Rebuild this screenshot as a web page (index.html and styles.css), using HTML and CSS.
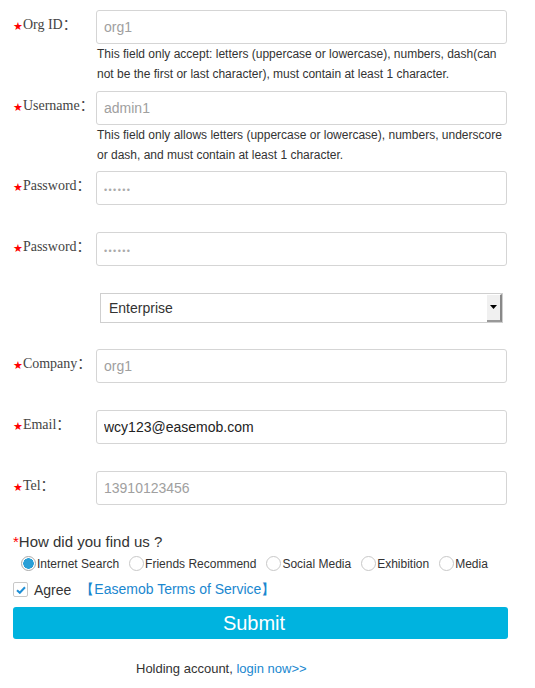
FILE: index.html
```html
<!DOCTYPE html>
<html>
<head>
<meta charset="utf-8">
<link rel="stylesheet" href="styles.css">
</head>
<body>
<form class="reg">
  <div class="row">
    <label class="lbl"><span class="star">★</span>Org ID：</label>
    <div class="field">
      <input class="inp" type="text" placeholder="org1">
      <div class="help">This field only accept: letters (uppercase or lowercase), numbers, dash(can not be the first or last character), must contain at least 1 character.</div>
    </div>
  </div>
  <div class="row">
    <label class="lbl"><span class="star">★</span>Username：</label>
    <div class="field">
      <input class="inp" type="text" placeholder="admin1">
      <div class="help">This field only allows letters (uppercase or lowercase), numbers, underscore or dash, and must contain at least 1 character.</div>
    </div>
  </div>
  <div class="row">
    <label class="lbl"><span class="star">★</span>Password：</label>
    <div class="field">
      <input class="inp dots" type="text" placeholder="••••••">
      <div class="help"></div>
    </div>
  </div>
  <div class="row">
    <label class="lbl"><span class="star">★</span>Password：</label>
    <div class="field">
      <input class="inp dots" type="text" placeholder="••••••">
      <div class="help"></div>
    </div>
  </div>
  <div class="row">
    <div class="lbl"></div>
    <div class="field">
      <div class="sel"><span class="sel-text">Enterprise</span><span class="sel-btn"><svg width="7" height="4" viewBox="0 0 7 4"><path d="M0 0H7L3.5 4Z" fill="#000"/></svg></span></div>
      <div class="help"></div>
    </div>
  </div>
  <div class="row">
    <label class="lbl"><span class="star">★</span>Company：</label>
    <div class="field">
      <input class="inp" type="text" placeholder="org1">
      <div class="help"></div>
    </div>
  </div>
  <div class="row">
    <label class="lbl"><span class="star">★</span>Email：</label>
    <div class="field">
      <input class="inp" type="text" value="wcy123@easemob.com">
      <div class="help"></div>
    </div>
  </div>
  <div class="row">
    <label class="lbl"><span class="star">★</span>Tel：</label>
    <div class="field">
      <input class="inp" type="text" placeholder="13910123456">
      <div class="help"></div>
    </div>
  </div>

  <div class="q"><span class="qstar">*</span>How did you find us ?</div>
  <div class="radios">
    <label class="radio"><span class="rc on"></span>Internet Search</label>
    <label class="radio"><span class="rc"></span>Friends Recommend</label>
    <label class="radio"><span class="rc"></span>Social Media</label>
    <label class="radio"><span class="rc"></span>Exhibition</label>
    <label class="radio"><span class="rc"></span>Media</label>
  </div>
  <div class="agree">
    <span class="cb"><svg width="10" height="8" viewBox="0 0 10 8"><path d="M1 4.2L3.8 6.8L9 1.2" fill="none" stroke="#1e8fd6" stroke-width="2"/></svg></span>
    <span class="agree-t">Agree</span>
    <a class="terms" href="#">【Easemob Terms of Service】</a>
  </div>
  <button class="submit" type="button">Submit</button>
  <div class="login">Holding account, <a href="#">login now&gt;&gt;</a></div>
</form>
</body>
</html>
```

FILE: styles.css
```css
* { box-sizing: border-box; }
body {
  margin: 0;
  background: #fff;
  font-family: "Liberation Sans", Arial, sans-serif;
  color: #333;
}
.reg {
  width: 509px;
  padding: 10px 0 0 13px;
}
.row {
  display: flex;
  margin-bottom: 6.7px;
}
.lbl {
  width: 83px;
  flex: none;
  font-family: "Liberation Serif", "Noto Sans CJK SC", serif;
  font-size: 14px;
  line-height: 20px;
  padding-top: 5px;
  color: #444;
  white-space: nowrap;
}
.star {
  color: #f00;
  font-size: 11px;
  vertical-align: -1px;
  font-family: "DejaVu Sans", sans-serif;
}
.field {
  width: 411px;
  flex: none;
}
.inp {
  display: block;
  width: 411px;
  height: 34px;
  margin: 0;
  border: 1px solid #d5d5d5;
  border-radius: 3px;
  padding: 0 7px;
  font-family: "Liberation Sans", Arial, sans-serif;
  font-size: 14px;
  color: #222;
  outline: none;
}
.inp::placeholder { color: #a0a0a0; }
.dots::placeholder { font-size: 9px; letter-spacing: 1.4px; color: #aaa; }
.help {
  min-height: 20px;
  font-size: 12px;
  line-height: 20px;
  color: #333;
  padding-left: 1px;
}
.sel {
  margin-left: 4px;
  width: 403px;
  height: 30px;
  border: 1px solid #cfcfcf;
  display: flex;
  align-items: stretch;
  font-size: 14px;
  color: #333;
}
.sel-text {
  flex: 1;
  padding-left: 8px;
  line-height: 28px;
}
.sel-btn {
  width: 15px;
  background: #f0f0f0;
  border-right: 2px solid #888;
  border-bottom: 2px solid #999;
  border-top: 1px solid #fff;
  display: flex;
  align-items: center;
  justify-content: center;
}
.q {
  margin-top: 2px;
  font-size: 15px;
  line-height: 20px;
  color: #333;
}
.qstar { color: #f00; font-size: 15px; }
.radios {
  display: flex;
  align-items: center;
  margin-top: 2px;
  padding-left: 8px;
  height: 20px;
  font-size: 12px;
  color: #333;
  white-space: nowrap;
}
.radio {
  display: flex;
  align-items: center;
  margin-right: 10px;
  white-space: nowrap;
}
.rc {
  width: 15px;
  height: 15px;
  border-radius: 50%;
  border: 1px solid #c8c8c8;
  background: #fff;
  margin-right: 1px;
  flex: none;
}
.rc.on {
  border-color: #a8a8a8;
  background: radial-gradient(circle, #2a9fd6 0 5px, #fff 5.5px);
}
.agree {
  display: flex;
  align-items: center;
  height: 22px;
  margin-top: 5px;
  font-size: 14px;
}
.cb {
  width: 15px;
  height: 15px;
  border: 1px solid #c8c8c8;
  border-radius: 2px;
  display: flex;
  align-items: center;
  justify-content: center;
  margin-right: 6px;
}
.agree-t { color: #333; margin-right: 9px; }
.terms {
  color: #1a87cf;
  text-decoration: none;
}
.submit {
  display: block;
  margin-top: 6px;
  width: 495px;
  height: 32px;
  border: none;
  border-radius: 3px;
  background: #00b3df;
  color: #fff;
  font-family: "Liberation Sans", Arial, sans-serif;
  font-size: 20px;
  line-height: 32px;
  padding: 0 13px 0 0;
}
.login {
  margin-top: 22px;
  padding-left: 123px;
  font-size: 13px;
  color: #333;
}
.login a { color: #1a87cf; text-decoration: none; }
```
